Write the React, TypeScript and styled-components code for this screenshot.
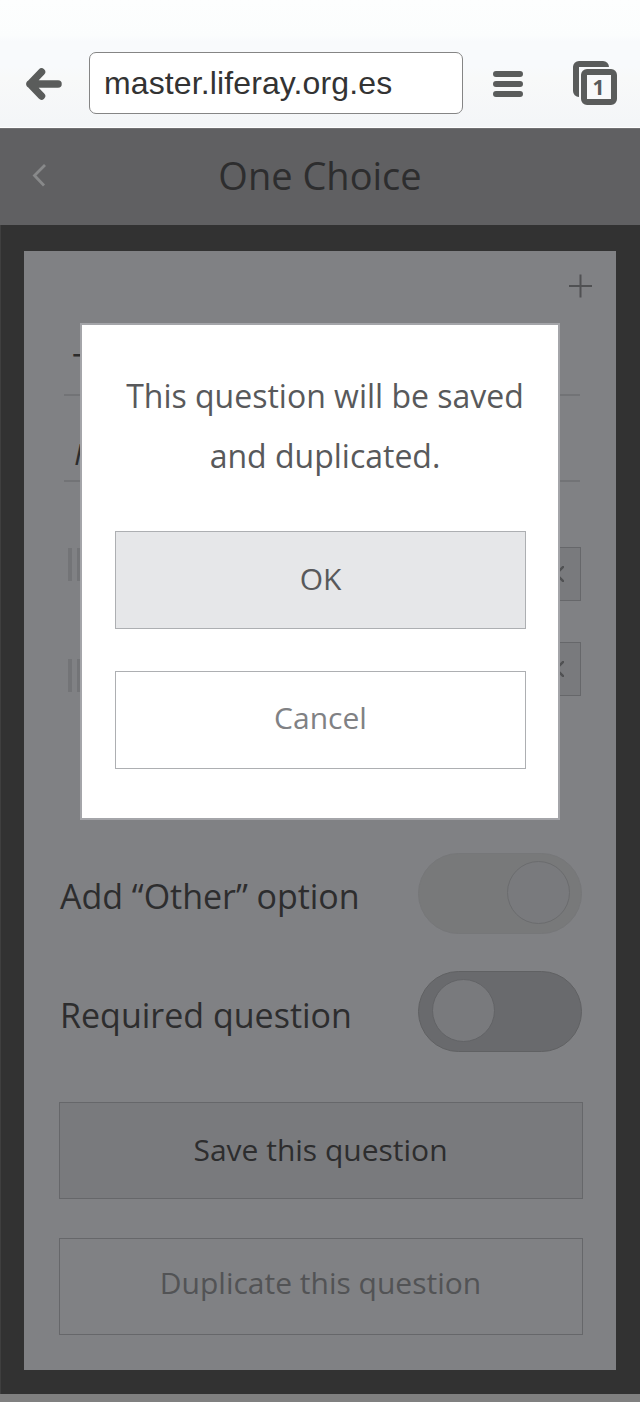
import React from "react";
import styled, { createGlobalStyle } from "styled-components";

const GlobalStyle = createGlobalStyle`
  *, *::before, *::after { box-sizing: border-box; }
  body { margin: 0; background: #808080; }
  button { font: inherit; margin: 0; padding: 0; cursor: pointer; }
`;

const Screen = styled.div`
  position: relative;
  width: 640px;
  height: 1402px;
  overflow: hidden;
  display: flex;
  flex-direction: column;
  background: #808080;
  font-family: "Open Sans", "Noto Sans", sans-serif;
`;

const BrowserBar = styled.header`
  height: 128px;
  flex: none;
  display: flex;
  align-items: flex-start;
  padding: 52px 0 0 25px;
  background: linear-gradient(#fdfefe 0, #fbfdfd 36px, #f8fafc 42px, #f8fafc 66px, #f8f9f9 78px, #f4f6f8 122px);
  border-bottom: 1px solid #fff;
`;

const Address = styled.div`
  width: 374px;
  height: 62px;
  flex: none;
  margin-left: 26px;
  padding: 0 14px;
  border: 1px solid #858585;
  border-radius: 7px;
  background: #fff;
  color: #333;
  font: 32px/60px "Liberation Sans", Arial, sans-serif;
  letter-spacing: 0.12px;
  white-space: nowrap;
`;

const Glyph = styled.svg<{ $ml?: number; $mt?: number }>`
  display: block;
  flex: none;
  margin-left: ${(p) => p.$ml ?? 0}px;
  margin-top: ${(p) => p.$mt ?? 0}px;
`;

const TitleBar = styled.div`
  height: 97px;
  flex: none;
  display: grid;
  grid-template-columns: 60px 1fr 60px;
  background: #606062;
  border-top: 1px solid #717173;
`;

const Title = styled.h1`
  margin: 0;
  text-align: center;
  color: #2d2d2e;
  font-size: 38px;
  font-weight: 400;
  line-height: 93px;
`;

const Page = styled.main`
  height: 1169px;
  flex: none;
  padding: 26px 24px 24px 23px;
  background: #323232;
  border-left: 1px solid #3f3f3f;
`;

const Card = styled.section`
  height: 1119px;
  display: flex;
  flex-direction: column;
  padding: 23px 34px 0 35px;
  background: #808184;
`;

const AddRow = styled.div`
  display: flex;
  justify-content: flex-end;
  height: 25px;
  margin-right: -10px;
`;

const Field = styled.div<{ $height: number; $italic?: boolean }>`
  height: ${(p) => p.$height}px;
  margin: 0 2px 0 5px;
  padding: 0 ${(p) => (p.$italic ? 10 : 9)}px ${(p) => (p.$italic ? 6 : 8)}px;
  display: flex;
  align-items: flex-end;
  border-bottom: 2px solid #727376;
  color: #2c2c2d;
  font-size: ${(p) => (p.$italic ? 30 : 35)}px;
  font-style: ${(p) => (p.$italic ? "italic" : "normal")};
  line-height: 40px;
`;

const OptionRow = styled.div<{ $mt: number }>`
  height: 54px;
  margin: ${(p) => p.$mt}px 1px 0 9px;
  display: flex;
  justify-content: space-between;
`;

const Handle = styled.span<{ $mt: number }>`
  width: 22px;
  height: 33px;
  margin-top: ${(p) => p.$mt}px;
  border: solid #737477;
  border-width: 0 4px;
  position: relative;
  &::after {
    content: "";
    position: absolute;
    inset: 0 5px;
    background: #737477;
  }
`;

const RemoveButton = styled.button`
  width: 50px;
  height: 54px;
  display: grid;
  place-items: center;
  border: 1px solid #66676a;
  background: #797a7d;
`;

const SettingRow = styled.div<{ $mt: number }>`
  height: 82px;
  margin-top: ${(p) => p.$mt}px;
  display: flex;
  justify-content: space-between;
`;

const SettingLabel = styled.span<{ $spacing: number; $mt: number }>`
  margin: ${(p) => p.$mt}px 0 0 1px;
  color: #2d2d2e;
  font-size: 34px;
  font-weight: 400;
  line-height: 82px;
  letter-spacing: ${(p) => p.$spacing}px;
  white-space: nowrap;
`;

const Switch = styled.span<{ $on?: boolean }>`
  width: 164px;
  height: 81px;
  flex: none;
  display: flex;
  justify-content: ${(p) => (p.$on ? "flex-end" : "flex-start")};
  padding: 7px 11px 0 13px;
  border-radius: 41px;
  border: 1px solid ${(p) => (p.$on ? "#767779" : "#606163")};
  background: ${(p) => (p.$on ? "#78797a" : "#696a6d")};
`;

const Knob = styled.span<{ $on?: boolean }>`
  width: 63px;
  height: 63px;
  border-radius: 50%;
  border: 1px solid ${(p) => (p.$on ? "#6b6c6e" : "#626366")};
  background: #797a7d;
`;

const WideButton = styled.button<{ $filled?: boolean; $mt: number }>`
  width: 524px;
  height: 97px;
  flex: none;
  margin-top: ${(p) => p.$mt}px;
  padding: 0 1px ${(p) => (p.$filled ? 3 : 9)}px 0;
  border: 1px solid #66676a;
  background: ${(p) => (p.$filled ? "#797a7d" : "transparent")};
  color: ${(p) => (p.$filled ? "#2d2d2e" : "#525355")};
  font-size: 30px;
  font-weight: 400;
`;

const Dialog = styled.div`
  position: absolute;
  left: 80px;
  top: 323px;
  width: 480px;
  height: 497px;
  padding: 41px 33px 0;
  display: flex;
  flex-direction: column;
  border: 2px solid #a4a5a9;
  background: #fff;
`;

const Message = styled.p`
  margin: 0 -15px 0 -5px;
  text-align: center;
  color: #58595b;
  font-size: 32px;
  font-weight: 400;
  line-height: 60px;
`;

const DialogButton = styled.button<{ $primary?: boolean }>`
  width: 411px;
  height: 98px;
  flex: none;
  margin-top: ${(p) => (p.$primary ? 45 : 42)}px;
  padding-bottom: ${(p) => (p.$primary ? 4 : 5)}px;
  border: 1px solid #adafb2;
  background: ${(p) => (p.$primary ? "#e6e7e9" : "#fff")};
  color: ${(p) => (p.$primary ? "#58595b" : "#808184")};
  font-size: 30px;
`;

const BackArrow = () => (
  <Glyph width="38" height="36" viewBox="0 0 38 36" $mt={14}>
    <path d="M16.500 6 5 18l11.500 12M5 18h28" fill="none" stroke="#5a5c5b" strokeWidth="7.500" strokeLinecap="round" strokeLinejoin="round" />
  </Glyph>
);

const MenuIcon = () => (
  <Glyph width="30" height="28" viewBox="0 0 30 28" $ml={30} $mt={18}>
    <path d="M3 4h24M3 14h24M3 24h24" stroke="#5a5c5b" strokeWidth="6" strokeLinecap="round" />
  </Glyph>
);

const TabsIcon = () => (
  <Glyph width="46" height="46" viewBox="0 0 46 46" $ml={49} $mt={8}>
    <path d="M37 7a6 6 0 0 0-6-6H7a6 6 0 0 0-6 6v24a6 6 0 0 0 6 6V7Z" fill="#5a5c5b" />
    <rect x="8" y="8" width="37" height="37" rx="6" fill="#f8f9fa" />
    <rect x="12" y="12" width="30" height="30" rx="3" fill="#f8f9fa" stroke="#5a5c5b" strokeWidth="6" />
    <text x="26.500" y="34.500" textAnchor="middle" fontFamily="Open Sans, sans-serif" fontSize="21" fontWeight="700" fill="#5a5c5b">
      1
    </text>
  </Glyph>
);

const CloseIcon = () => (
  <svg width="16" height="16" viewBox="0 0 16 16">
    <path d="m0 0 16 16M16 0 0 16" stroke="#505153" strokeWidth="2.400" />
  </svg>
);

export default function App() {
  return (
    <>
      <GlobalStyle />
      <Screen>
        <BrowserBar>
          <BackArrow />
          <Address>master.liferay.org.es</Address>
          <MenuIcon />
          <TabsIcon />
        </BrowserBar>
        <TitleBar>
          <Glyph width="16" height="24" viewBox="0 0 16 24" $ml={32} $mt={34}>
            <path d="M13 2 2.500 12.500 12 22.500" fill="none" stroke="#88898a" strokeWidth="2.800" />
          </Glyph>
          <Title>One Choice</Title>
        </TitleBar>
        <Page>
          <Card>
            <AddRow>
              <Glyph width="24" height="24" viewBox="0 0 24 24">
                <path d="M1 12h23M12.500 .5v23" stroke="#505153" strokeWidth="2" />
              </Glyph>
            </AddRow>
            <Field $height={97}>Title</Field>
            <Field $height={86} $italic>Help text</Field>
            <OptionRow $mt={65}>
              <Handle $mt={1} />
              <RemoveButton><CloseIcon /></RemoveButton>
            </OptionRow>
            <OptionRow $mt={41}>
              <Handle $mt={17} />
              <RemoveButton><CloseIcon /></RemoveButton>
            </OptionRow>
            <SettingRow $mt={157}>
              <SettingLabel $mt={2} $spacing={-0.03}>Add “Other” option</SettingLabel>
              <Switch $on><Knob $on /></Switch>
            </SettingRow>
            <SettingRow $mt={36}>
              <SettingLabel $mt={3} $spacing={0}>Required question</SettingLabel>
              <Switch><Knob /></Switch>
            </SettingRow>
            <WideButton $filled $mt={49}>Save this question</WideButton>
            <WideButton $mt={39}>Duplicate this question</WideButton>
          </Card>
        </Page>
        <Dialog>
          <Message>This question will be saved<br />and duplicated.</Message>
          <DialogButton $primary>OK</DialogButton>
          <DialogButton>Cancel</DialogButton>
        </Dialog>
      </Screen>
    </>
  );
}
